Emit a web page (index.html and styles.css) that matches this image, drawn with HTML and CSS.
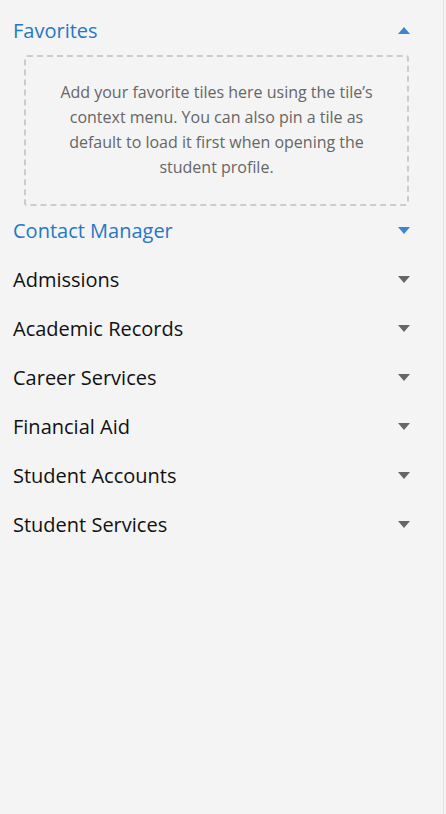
FILE: index.html
```html
<!DOCTYPE html>
<html>
<head>
<meta charset="utf-8">
<link rel="stylesheet" href="styles.css">
</head>
<body>
<div class="panel">
  <div class="section">
    <div class="header open"><span class="title">Favorites</span><span class="caret up"></span></div>
    <div class="dropzone">Add your favorite tiles here using the tile’s context menu. You can also pin a tile as default to load it first when opening the student profile.</div>
  </div>
  <div class="header active"><span class="title">Contact Manager</span><span class="caret down blue"></span></div>
  <div class="header"><span class="title">Admissions</span><span class="caret down"></span></div>
  <div class="header"><span class="title">Academic Records</span><span class="caret down"></span></div>
  <div class="header"><span class="title">Career Services</span><span class="caret down"></span></div>
  <div class="header"><span class="title">Financial Aid</span><span class="caret down"></span></div>
  <div class="header"><span class="title">Student Accounts</span><span class="caret down"></span></div>
  <div class="header"><span class="title">Student Services</span><span class="caret down"></span></div>
</div>
</body>
</html>
```
FILE: styles.css
```css
html, body {
  margin: 0;
  padding: 0;
  background: #f4f4f4;
  height: 100%;
}
body {
  font-family: "Open Sans", "Liberation Sans", sans-serif;
}
.panel {
  box-sizing: border-box;
  width: 444px;
  min-height: 814px;
  border-right: 1px solid #e2e2e2;
  padding-top: 6px;
}
.header {
  display: flex;
  align-items: center;
  justify-content: space-between;
  height: 49px;
  padding: 0 33px 0 13px;
  font-size: 20px;
  color: #111;
}
.header.open, .header.active {
  color: #2677c4;
}
.caret {
  width: 0;
  height: 0;
  border-left: 6px solid transparent;
  border-right: 6px solid transparent;
}
.caret.down {
  border-top: 7px solid #666;
}
.caret.down.blue {
  border-top-color: #3a87cf;
}
.caret.up {
  border-bottom: 7px solid #3a87cf;
}
.dropzone {
  margin: 0 34px 0 24px;
  border: 2px dashed #cccccc;
  border-radius: 3px;
  padding: 23px 30px 24px;
  text-align: center;
  font-size: 16px;
  line-height: 25px;
  color: #666;
}
```
